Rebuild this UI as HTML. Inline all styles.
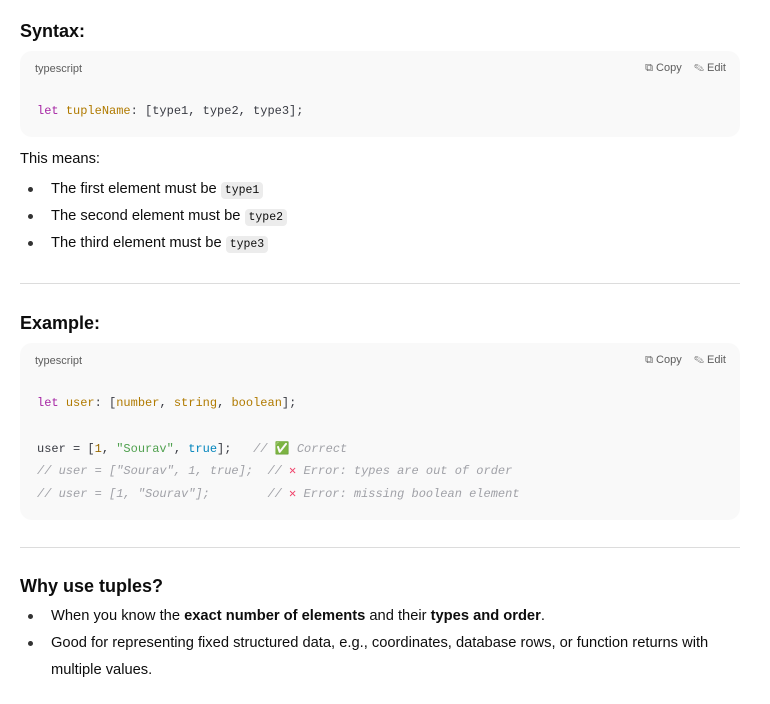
<!DOCTYPE html>
<html><head><meta charset="utf-8"><style>
body{margin:0;background:#fff;width:770px;height:704px;position:relative;font-family:"Liberation Sans",sans-serif;color:#0d0d0d;overflow:hidden}
h2{position:absolute;margin:0;font-size:18px;font-weight:bold;left:20px}
.cb{position:absolute;left:20px;width:720px;background:#f9f9f9;border-radius:12px}
.lbl{position:absolute;left:15px;font-size:11px;color:#5d5d5d}
.tools{position:absolute;right:14px;font-size:11px;color:#5d5d5d}
.m{font-family:"Liberation Mono",monospace;font-size:12px;position:absolute;left:17px;white-space:pre;color:#383a42}
.k{color:#a626a4}.t{color:#b07a00}.s{color:#50a14f}.b{color:#0184bc}.c{color:#a0a1a7;font-style:italic}.n{color:#986801}
.p{font-size:14.7px;position:absolute;left:20px}
li{position:absolute;left:31px;font-size:14.7px;list-style:none}
li:before{content:"";position:absolute;left:-3px;top:6px;width:5px;height:5px;border-radius:50%;background:#333}
li span.tx{position:absolute;left:20px;white-space:nowrap;top:0}
code{font-family:"Liberation Mono",monospace;font-size:11.5px;background:#ececec;border-radius:4px;padding:2px 4px}
hr{position:absolute;left:20px;width:720px;border:0;border-top:1px solid #dcdcdc;margin:0}
</style></head><body>
<h2 style="top:21px">Syntax:</h2>
<div class="cb" style="top:51px;height:86px">
<div class="lbl" style="top:12px">typescript</div>
<div class="tools" style="top:11px">⧉ Copy &nbsp;&nbsp; ✎ Edit</div>
<div class="m" style="top:53px"><span class="k">let</span> <span class="t">tupleName</span>: [type1, type2, type3];</div>
</div>
<div class="p" style="top:151px">This means:</div>
<ul style="margin:0;padding:0">
<li style="top:181px"><span class="tx">The first element must be <code>type1</code></span></li>
<li style="top:208px"><span class="tx">The second element must be <code>type2</code></span></li>
<li style="top:235px"><span class="tx">The third element must be <code>type3</code></span></li>
</ul>
<hr style="top:283px">
<h2 style="top:313px">Example:</h2>
<div class="cb" style="top:343px;height:177px">
<div class="lbl" style="top:12px">typescript</div>
<div class="tools" style="top:11px">⧉ Copy &nbsp;&nbsp; ✎ Edit</div>
<div class="m" style="top:53px"><span class="k">let</span> <span class="t">user</span>: [<span class="t">number</span>, <span class="t">string</span>, <span class="t">boolean</span>];</div>
<div class="m" style="top:98px">user = [<span class="n">1</span>, <span class="s">"Sourav"</span>, <span class="b">true</span>];   <span class="c">// <span style="color:#3cb371;font-style:normal">✅</span> Correct</span></div>
<div class="m c" style="top:120px">// user = ["Sourav", 1, true];  // <span style="color:#f0436b;font-style:normal;font-weight:bold">✕</span> Error: types are out of order</div>
<div class="m c" style="top:143px">// user = [1, "Sourav"];        // <span style="color:#f0436b;font-style:normal;font-weight:bold">✕</span> Error: missing boolean element</div>
</div>
<hr style="top:547px">
<h2 style="top:576px">Why use tuples?</h2>
<ul style="margin:0;padding:0">
<li style="top:608px"><span class="tx">When you know the <b>exact number of elements</b> and their <b>types and order</b>.</span></li>
<li style="top:635px"><span class="tx">Good for representing fixed structured data, e.g., coordinates, database rows, or function returns with</span></li>
</ul>
<div class="p" style="top:662px;left:51px">multiple values.</div>
</body></html>
